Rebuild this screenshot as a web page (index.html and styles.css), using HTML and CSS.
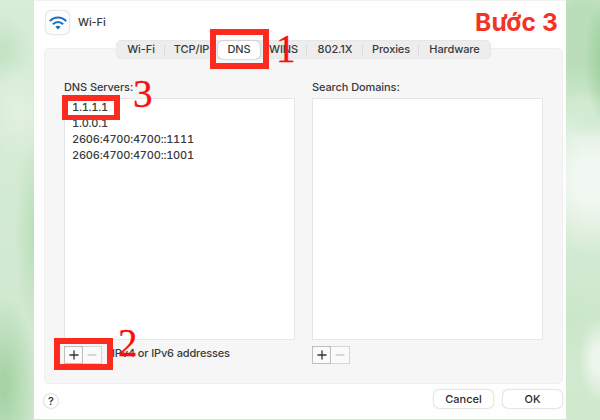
FILE: index.html
```html
<!DOCTYPE html>
<html lang="vi">
<head>
    <meta charset="UTF-8">
    <meta name="viewport" content="width=device-width, initial-scale=1.0">
    <title>Wi-Fi - DNS</title>
    <link rel="stylesheet" href="styles.css">
</head>
<body>
    <div class="dialog">
        <header>
            <div class="wifi-icon">
                <svg width="18" height="14" viewBox="0 0 18 14" fill="none" stroke="#1b70c4" stroke-width="2.1">
                    <path d="M0.8 5.1 C5.4 0.2 12.6 0.2 17.2 5.1"/>
                    <path d="M3.9 8.3 C6.8 5.3 11.2 5.3 14.1 8.3"/>
                    <path d="M9 13.4 L6.4 10.8 C7.8 9.4 10.2 9.4 11.6 10.8 Z" fill="#1b70c4" stroke="none"/>
                </svg>
            </div>
            <span class="title">Wi-Fi</span>
            <span class="step">Bước 3</span>
        </header>

        <div class="panel">
            <nav class="tabs">
                <span class="tab wifi">Wi-Fi</span>
                <span class="tab tcp">TCP/IP</span>
                <span class="tab dns active">DNS</span>
                <span class="tab wins">WINS</span>
                <span class="tab dot1x">802.1X</span>
                <span class="tab proxies">Proxies</span>
                <span class="tab hardware">Hardware</span>
            </nav>
            <div class="columns">
                <section>
                    <h2>DNS Servers:</h2>
                    <ul class="list">
                        <li>1.1.1.1</li>
                        <li>1.0.0.1</li>
                        <li>2606:4700:4700::1111</li>
                        <li>2606:4700:4700::1001</li>
                    </ul>
                    <div class="controls">
                        <button class="add"><svg width="10" height="10" viewBox="0 0 10 10"><path d="M5 0.5V9.5M0.5 5H9.5"/></svg></button>
                        <button class="remove"><svg width="10" height="10" viewBox="0 0 10 10"><path d="M0.5 5H9.5"/></svg></button>
                        <span class="hint">IPv4 or IPv6 addresses</span>
                    </div>
                </section>
                <section>
                    <h2>Search Domains:</h2>
                    <ul class="list"></ul>
                    <div class="controls">
                        <button class="add"><svg width="10" height="10" viewBox="0 0 10 10"><path d="M5 0.5V9.5M0.5 5H9.5"/></svg></button>
                        <button class="remove"><svg width="10" height="10" viewBox="0 0 10 10"><path d="M0.5 5H9.5"/></svg></button>
                    </div>
                </section>
            </div>
        </div>

        <footer>
            <button class="help">?</button>
            <button class="btn">Cancel</button>
            <button class="btn">OK</button>
        </footer>
    </div>

    <!-- tutorial marks over the dialog -->
    <div class="mark mark-tab"></div>
    <div class="mark mark-add"></div>
    <div class="mark mark-server"></div>
    <span class="num num-1">1</span>
    <span class="num num-2">2</span>
    <span class="num num-3">3</span>
</body>
</html>
```
FILE: styles.css
```css
* {
    box-sizing: border-box;
}
body {
    margin: 0;
    width: 600px;
    height: 420px;
    overflow: hidden;
    position: relative;
    font-family: Inter, 'Liberation Sans', sans-serif;
    font-size: 11px;
    font-weight: 500;
    letter-spacing: -0.1px;
    color: #3a3a3a;
    background:
        radial-gradient(ellipse 22px 65px at 606px 60px, #9dd09d 20%, transparent 100%),
        radial-gradient(ellipse 34px 24px at 590px 114px, #d3ebd3 40%, transparent 100%),
        radial-gradient(ellipse 60px 85px at 580px 36px, #b9deb9 35%, transparent 100%),
        radial-gradient(ellipse 60px 75px at 592px 180px, #f1f8f1 30%, transparent 100%),
        radial-gradient(ellipse 22px 42px at 600px 360px, #edf6ec 30%, transparent 100%),
        radial-gradient(ellipse 60px 50px at 572px 318px, #cbe7ca 10%, transparent 100%),
        radial-gradient(ellipse 34px 90px at 4px 385px, #a5d3a4 10%, transparent 100%),
        radial-gradient(ellipse 24px 100px at 38px 235px, #b9deb8 10%, transparent 100%),
        radial-gradient(ellipse 36px 50px at 18px 112px, #e1f0e0 10%, transparent 100%),
        radial-gradient(ellipse 30px 36px at 2px 50px, #c4e3c3 10%, transparent 100%),
        linear-gradient(#d8ecd7, #cfe8ce);
}
.dialog {
    width: 532px;
    height: 419px;
    margin-left: 34px;
    background: #fefefe;
    border-top: 1px solid #f1f3f1;
}
header {
    display: flex;
    height: 47px;
    padding: 10px 8px 0 12px;
}
.wifi-icon {
    display: flex;
    align-items: center;
    justify-content: center;
    width: 23px;
    height: 23px;
    border-radius: 5px;
    background: #fdfdfd;
    box-shadow: 0 0 2px rgba(0, 0, 0, 0.35);
}
.title {
    margin: 3px 0 0 9px;
    line-height: 16px;
}
.step {
    margin: -5px 0 0 auto;
    font-size: 24.5px;
    line-height: 32px;
    font-weight: 700;
    letter-spacing: 0.15px;
    color: #f23427;
}
.panel {
    width: 519px;
    height: 336px;
    margin-left: 10px;
    background: #f6f6f6;
    border: 1px solid #efefef;
    border-radius: 5px;
}
.tabs {
    display: flex;
    align-items: center;
    width: 375px;
    height: 19px;
    margin: -9px 0 0 71px;
    background: #ededed;
    border: 1px solid #e7e7e7;
    border-radius: 5px;
}
.tab {
    height: 18px;
    line-height: 17px;
    text-align: center;
    position: relative;
}
.wifi { width: 48px; }
.tcp { width: 53px; }
.dns { width: 42px; }
.wins { width: 47px; }
.dot1x { width: 56px; }
.proxies { width: 56px; }
.hardware { width: 71px; }
.wifi::after, .dot1x::after, .proxies::after, .wins::after {
    content: "";
    position: absolute;
    right: 0;
    top: 4px;
    width: 1px;
    height: 10px;
    background: #d9d9d9;
}
.active {
    background: white;
    border-radius: 5px;
    box-shadow: 0 0 2px rgba(0, 0, 0, 0.35);
}
.columns {
    display: flex;
    gap: 17px;
    padding: 20px 0 0 19px;
}
section {
    width: 231px;
}
h2 {
    margin: 0 0 3px;
    font-size: 11px;
    font-weight: 500;
    line-height: 16px;
}
.list {
    height: 242px;
    margin: 0;
    padding: 0 7px;
    list-style: none;
    background: white;
    border: 1px solid #e6e6e6;
    line-height: 16.1px;
    letter-spacing: -0.2px;
    font-variant-numeric: tabular-nums;
}
.controls {
    display: flex;
    margin-top: 6px;
    height: 18px;
}
.controls button {
    display: flex;
    align-items: center;
    justify-content: center;
    width: 19px;
    height: 18px;
    padding: 0;
    background: #fafafa;
    border: 1px solid #bdbdbd;
}
.controls svg {
    fill: none;
    stroke: #333;
    stroke-width: 1.3;
}
.controls .remove {
    border-color: #d6d6d6;
    border-left: none;
}
.controls .remove svg {
    stroke: #c4c4c4;
}
.hint {
    margin-left: 10px;
    line-height: 15px;
    letter-spacing: -0.15px;
}
footer {
    display: flex;
    align-items: center;
    gap: 10px;
    padding: 6px 4px 0 10px;
}
footer button {
    padding: 0;
    border: none;
    background: white;
    font-family: inherit;
    font-size: 11px;
    font-weight: 500;
    color: #2c2c2c;
    box-shadow: 0 0 2px rgba(0, 0, 0, 0.35);
}
.help {
    width: 14px;
    height: 14px;
    margin: 3px auto 0 0;
    border-radius: 50%;
    line-height: 14px;
}
.btn {
    width: 59px;
    height: 18px;
    border-radius: 5px;
}
.mark {
    position: absolute;
    border: 6px solid #fc2a1f;
}
.mark-tab {
    left: 210px;
    top: 29px;
    width: 59px;
    height: 40px;
}
.mark-add {
    left: 54px;
    top: 338px;
    width: 59px;
    height: 32px;
}
.mark-server {
    left: 62px;
    top: 95px;
    width: 58px;
    height: 25px;
    border-width: 6px 6px 5px;
}
.num {
    position: absolute;
    font-family: 'Liberation Serif', serif;
    font-size: 39px;
    font-weight: 400;
    line-height: 44px;
    color: #f90f0f;
    -webkit-text-stroke: 0.3px #f90f0f;
}
.num-1 {
    left: 276px;
    top: 27px;
}
.num-2 {
    left: 118px;
    top: 321px;
}
.num-3 {
    left: 133px;
    top: 72px;
}
```
